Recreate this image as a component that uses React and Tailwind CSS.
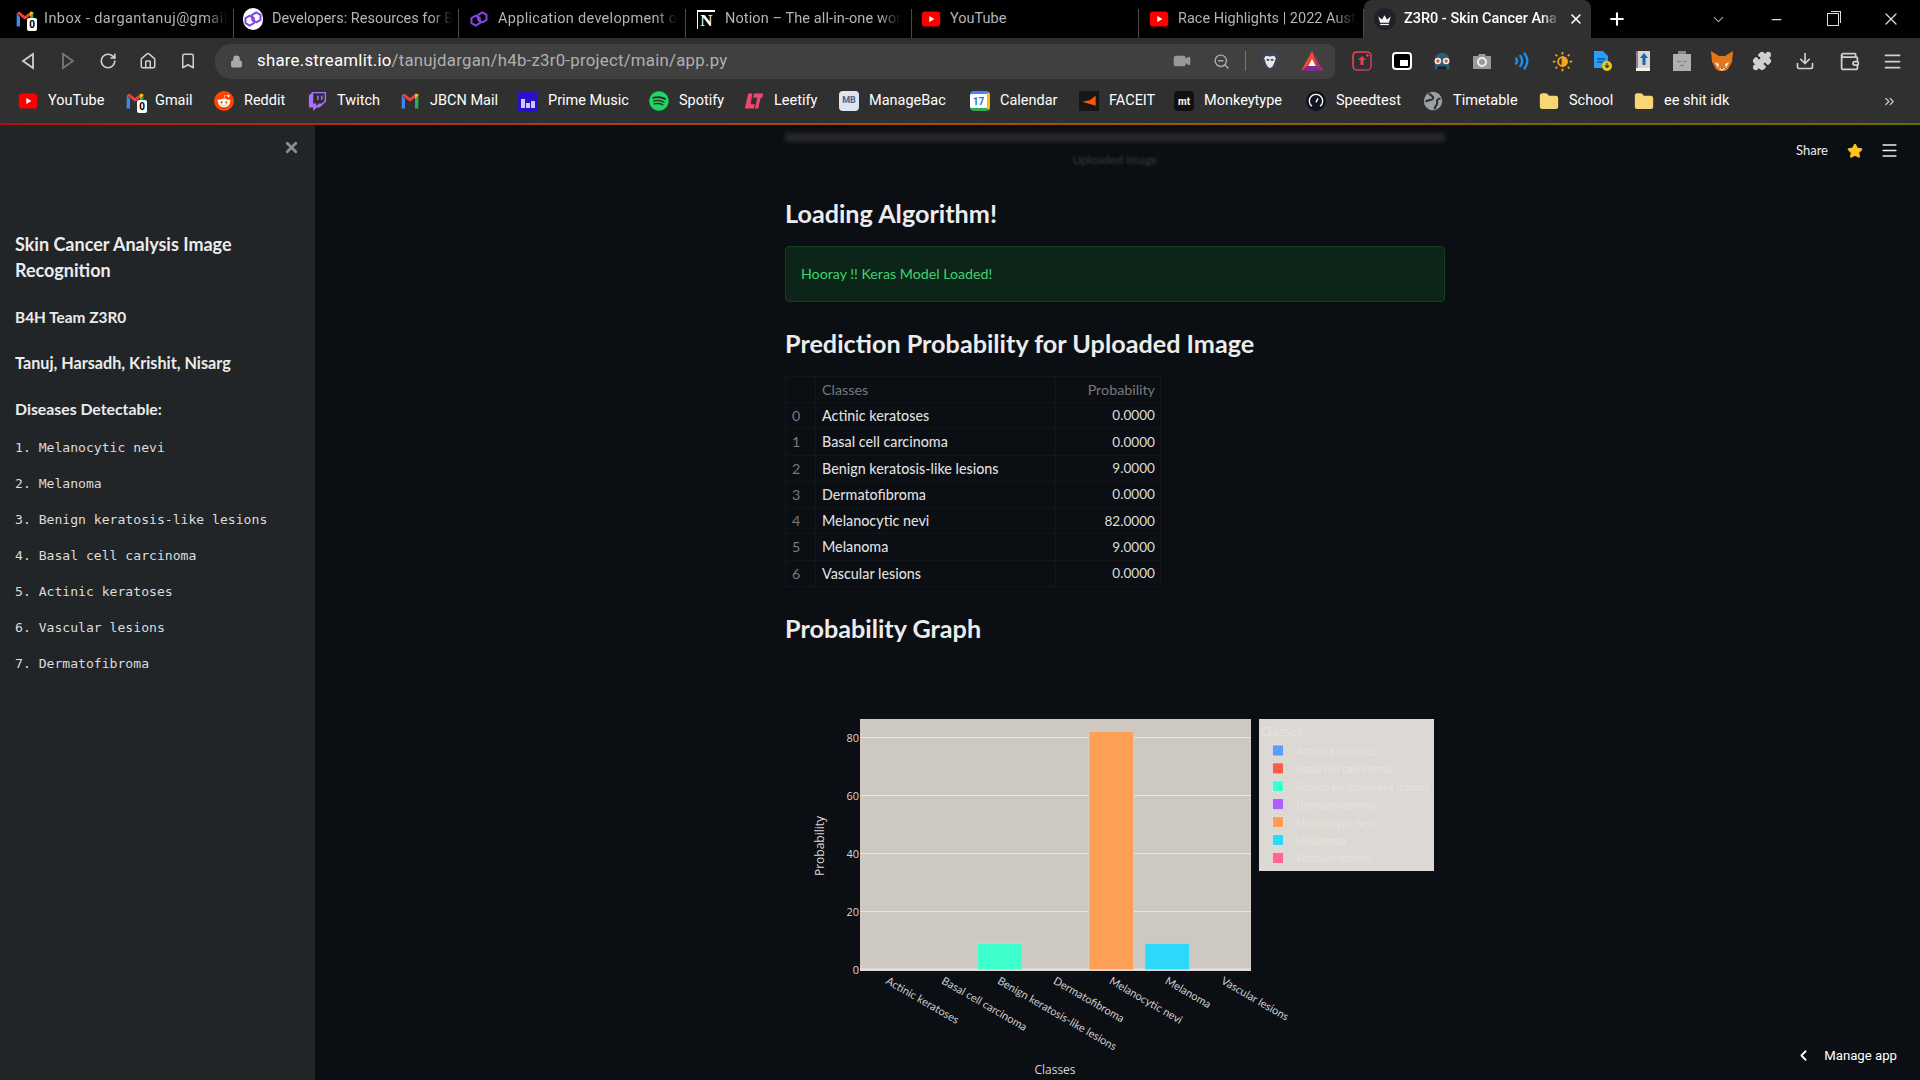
import React from 'react';
import {
  RotateCw, Home, Bookmark, Lock, Video, ZoomOut, Puzzle, Download, Wallet, Menu, X, Plus, ChevronDown,
  ChevronLeft, Minus, Star, ChevronsRight, Folder,
} from 'lucide-react';
import { FaRedditAlien, FaTwitch, FaSpotify } from 'react-icons/fa';

const segoe = { fontFamily: 'Roboto, "Open Sans", sans-serif' };

const Gmail = ({ size = 20, badge }) => (
  <div className="relative h-5 w-5">
    <svg width={size} height={size} viewBox="0 0 24 24">
      <path d="M2 5v16h4V10z" fill="#4285f4" />
      <path d="M22 5v16h-4V10z" fill="#34a853" />
      <path d="M2 5l10 8 10-8-3-2-7 5.5L5 3z" fill="#ea4335" />
      <path d="M18 10l4-5v-1l-3-1-1 1z" fill="#fbbc04" />
    </svg>
    {badge && (
      <span className="absolute -bottom-[2px] -right-[2px] flex h-[13px] w-[10px] items-center justify-center rounded-[2px] bg-white text-[10px] font-bold leading-none text-black">
        0
      </span>
    )}
  </div>
);

const YtIcon = ({ size = 20 }) => (
  <svg width={size} height={size} viewBox="0 0 24 24">
    <rect x="1" y="3" width="22" height="18" rx="4" fill="#f00" />
    <path d="M10 8.5l6 3.5-6 3.5z" fill="#fff" />
  </svg>
);

const Polygon = ({ color = '#8247e5', bg }) => (
  <div className={`flex h-[22px] w-[22px] items-center justify-center rounded-full ${bg ? 'bg-white' : ''}`}>
    <svg width="20" height="20" viewBox="0 0 24 24" fill="none" stroke={color} strokeWidth="2.4">
      <path d="M3 11l5-3 5 3v6l-5 3-5-3z" />
      <path d="M11 7l5-3 5 3v6l-5 3-5-3z" />
    </svg>
  </div>
);

const NotionIcon = () => (
  <div
    className="flex h-[19px] w-[18px] items-center justify-center border-t-2 border-l border-white bg-black text-[17px] font-bold leading-none text-white"
    style={{ fontFamily: '"Liberation Serif", serif' }}
  >
    N
  </div>
);

const Crown = () => (
  <div className="flex h-[22px] w-[22px] items-center justify-center rounded-full bg-[#1f2128]">
    <svg width="15" height="15" viewBox="0 0 24 24" fill="#f4f4f4">
      <path d="M2 7l6 5 4-7 4 7 6-5-3 10H5z" />
      <path d="M5 19h14v2H5z" />
    </svg>
  </div>
);

const fade = '[mask-image:linear-gradient(to_right,black_88%,transparent)]';

const tabs = [
  { title: 'Inbox - dargantanuj@gmail', icon: <Gmail badge />, w: 'w-[226px]', pl: 'pl-[7px]', track: 'tracking-[0.45px]', mask: fade },
  { title: 'Developers: Resources for B', icon: <Polygon bg />, w: 'w-[225px]', pl: 'pl-[9px]', track: '', mask: fade },
  { title: 'Application development o', icon: <Polygon />, w: 'w-[227px]', pl: 'pl-[10px]', track: 'tracking-[0.3px]', mask: fade },
  { title: 'Notion – The all-in-one wor', icon: <NotionIcon />, w: 'w-[226px]', pl: 'pl-[10px]', track: 'tracking-[0.1px]', mask: fade },
  { title: 'YouTube', icon: <YtIcon />, w: 'w-[227px]', pl: 'pl-[9px]', track: '', mask: '' },
  { title: 'Race Highlights | 2022 Aust', icon: <YtIcon />, w: 'w-[225px]', pl: 'pl-[10px]', track: '', mask: fade },
];

const bookmarks = [
  { label: 'YouTube', icon: <YtIcon />, w: 'w-[107px]' },
  { label: 'Gmail', icon: <Gmail badge />, w: 'w-[89px]' },
  { label: 'Reddit', icon: <div className="flex h-5 w-5 items-center justify-center rounded-full bg-[#ff4500] text-white"><FaRedditAlien size={14} /></div>, w: 'w-[93px]' },
  { label: 'Twitch', icon: <FaTwitch size={19} color="#a970ff" />, w: 'w-[93px]' },
  { label: 'JBCN Mail', icon: <Gmail />, w: 'w-[118px]' },
  { label: 'Prime Music', icon: (
    <div className="flex h-5 w-5 items-end justify-center gap-px bg-[#2a10c8] pb-[3px]">
      <span className="h-[9px] w-[4px] bg-[#cfc8ff]" />
      <span className="h-[5px] w-[4px] bg-[#cfc8ff]" />
      <span className="h-[7px] w-[4px] bg-[#cfc8ff]" />
    </div>
  ), w: 'w-[131px]' },
  { label: 'Spotify', icon: <FaSpotify size={20} color="#1ed760" />, w: 'w-[95px]' },
  { label: 'Leetify', icon: (
    <svg width="20" height="20" viewBox="0 0 24 24" fill="#f0476f">
      <path d="M5 3h5l-2 13h5l-1 5H1z" />
      <path d="M12 3h11l-1 5h-2l-3 13h-4l3-13h-5z" />
    </svg>
  ), w: 'w-[95px]' },
  { label: 'ManageBac', icon: (
    <div className="flex h-5 w-5 items-center justify-center rounded bg-[#dfe5ee] text-[9px] font-bold text-[#47608f]">MB</div>
  ), w: 'w-[131px]' },
  { label: 'Calendar', icon: (
    <div className="flex h-5 w-5 items-center justify-center rounded-sm border-t-[3px] border-r-[3px] border-b-[3px] border-t-[#4285f4] border-r-[#fbbc04] border-b-[#34a853] bg-white text-[10px] font-bold text-[#1a73e8]">17</div>
  ), w: 'w-[109px]' },
  { label: 'FACEIT', icon: (
    <div className="flex h-5 w-5 items-center justify-center bg-[#161616]">
      <svg width="16" height="16" viewBox="0 0 24 24"><path d="M22 4v15L2 13l11-2z" fill="#ff5500" /></svg>
    </div>
  ), w: 'w-[95px]' },
  { label: 'Monkeytype', icon: (
    <div className="flex h-5 w-5 items-center justify-center rounded bg-[#111] text-[10px] font-bold text-white">mt</div>
  ), w: 'w-[132px]' },
  { label: 'Speedtest', icon: (
    <div className="flex h-5 w-5 items-center justify-center rounded-full bg-[#11131f]">
      <svg width="16" height="16" viewBox="0 0 24 24" fill="none" stroke="#fff" strokeWidth="2">
        <path d="M6 20a10 10 0 1 1 12 0" />
        <path d="M12 14l3-6" />
      </svg>
    </div>
  ), w: 'w-[117px]' },
  { label: 'Timetable', icon: (
    <svg width="20" height="20" viewBox="0 0 24 24">
      <circle cx="12" cy="12" r="11" fill="#9aa0a6" />
      <path d="M7 3c3 3 6 3 5 6s-6 1-9 4M21 9c-3 0-5 2-4 5s-3 3-3 8" fill="none" stroke="#303030" strokeWidth="2.6" />
    </svg>
  ), w: 'w-[116px]' },
  { label: 'School', icon: <Folder size={21} color="#f7d774" fill="#f7d774" />, w: 'w-[95px]' },
  { label: 'ee shit idk', icon: <Folder size={21} color="#f7d774" fill="#f7d774" />, w: 'w-[110px]' },
];

const rows = [
  ['0', 'Actinic keratoses', '0.0000'],
  ['1', 'Basal cell carcinoma', '0.0000'],
  ['2', 'Benign keratosis-like lesions', '9.0000'],
  ['3', 'Dermatofibroma', '0.0000'],
  ['4', 'Melanocytic nevi', '82.0000'],
  ['5', 'Melanoma', '9.0000'],
  ['6', 'Vascular lesions', '0.0000'],
];

const diseases = [
  'Melanocytic nevi',
  'Melanoma',
  'Benign keratosis-like lesions',
  'Basal cell carcinoma',
  'Actinic keratoses',
  'Vascular lesions',
  'Dermatofibroma',
];

const chartData = [
  { name: 'Actinic keratoses', value: 0, color: '#5f9cff' },
  { name: 'Basal cell carcinoma', value: 0, color: '#f7604a' },
  { name: 'Benign keratosis-like lesions', value: 9, color: '#3dffcb' },
  { name: 'Dermatofibroma', value: 0, color: '#ac61ff' },
  { name: 'Melanocytic nevi', value: 82, color: '#ff9f56' },
  { name: 'Melanoma', value: 9, color: '#2dd9fb' },
  { name: 'Vascular lesions', value: 0, color: '#ff6692' },
];

// chart svg origin is at page (800, 700)
const Chart = () => {
  const left = 60;
  const slot = 55.86;
  const zero = 269.5;
  const unit = 2.9;
  return (
    <svg width="640" height="380" viewBox="0 0 640 380" style={{ fontFamily: '"Open Sans", sans-serif' }}>
      <rect x={left} y="19" width="391" height="252" fill="#cdc9c2" />
      {[20, 40, 60, 80].map((t) => (
        <line key={t} x1={left} x2={left + 391} y1={zero - t * unit} y2={zero - t * unit} stroke="#e7e5e1" strokeWidth="1" />
      ))}
      <line x1={left} x2={left + 391} y1={zero} y2={zero} stroke="#e7e5e1" strokeWidth="2" />
      {chartData.map((d, i) => (
        <rect
          key={d.name}
          x={left + slot * i + 5.6}
          y={zero - d.value * unit}
          width="44.7"
          height={d.value * unit}
          fill={d.color}
          stroke="#dcd9d4"
          strokeWidth="0.5"
        />
      ))}
      {[0, 20, 40, 60, 80].map((t) => (
        <text key={t} x="59" y={zero - t * unit + 4} textAnchor="end" fontSize="11" fill="#d8d8d8">{t}</text>
      ))}
      <text transform="translate(24,146) rotate(-90)" fontSize="12" fill="#d8d8d8" textAnchor="middle">Probability</text>
      {chartData.map((d, i) => (
        <text
          key={d.name}
          transform={`translate(${left + slot * i + 25},${283}) rotate(30)`}
          fontSize="11"
          fill="#cfcfcf"
          style={{ fontFamily: 'Lato, sans-serif' }}
        >
          {d.name}
        </text>
      ))}
      <text x="255" y="374" fontSize="12" fill="#d8d8d8" textAnchor="middle">Classes</text>
      <rect x="459" y="19" width="175" height="152" fill="#dcd9d4" />
      <text x="461" y="36" fontSize="12" fill="#e6e4e0">Classes</text>
      {chartData.map((d, i) => (
        <g key={d.name}>
          <rect x="472.5" y={45 + i * 17.9} width="11" height="11" fill={d.color} stroke="#e8e6e2" strokeWidth="0.7" />
          <text x="496" y={55 + i * 17.9} fontSize="10.2" fill="#e6e4e0">{d.name}</text>
        </g>
      ))}
    </svg>
  );
};

const Extensions = () => (
  <div className="flex items-center">
    <svg width="20" height="20" viewBox="0 0 20 20" className="ml-[17px]">
      <defs>
        <linearGradient id="pink" x1="0" y1="0" x2="1" y2="1">
          <stop offset="0" stopColor="#f2503f" />
          <stop offset="1" stopColor="#c22b8e" />
        </linearGradient>
      </defs>
      <rect x="1" y="1" width="18" height="18" rx="4" fill="none" stroke="url(#pink)" strokeWidth="1.6" />
      <path d="M10 5l4 4h-2.5v5h-3V9H6z" fill="#ee3a4f" />
      <circle cx="15.5" cy="4.5" r="1.2" fill="#f2503f" />
    </svg>
    <div className="ml-[20px] flex h-[18px] w-5 items-end justify-end rounded-sm border-2 border-white bg-black p-[2px]"><span className="h-[6px] w-[8px] bg-white" /></div>
    <svg width="22" height="22" viewBox="0 0 24 24" className="ml-[19px]">
      <path d="M4 11a8 8 0 0 1 16 0v10H4z" fill="#2c5f6e" />
      <rect x="7" y="18" width="10" height="3" fill="#12202a" />
      <circle cx="7.5" cy="12" r="3.6" fill="#f1ece6" />
      <circle cx="16.5" cy="12" r="3.6" fill="#f1ece6" />
      <circle cx="7.5" cy="12" r="1.8" fill="#d9573a" />
      <circle cx="16.5" cy="12" r="1.8" fill="#d9573a" />
    </svg>
    <svg width="20" height="20" viewBox="0 0 20 20" className="ml-[19px]">
      <path d="M1 5h5l1-2h6l1 2h5v13H1z" fill="#9a9a9a" />
      <circle cx="10" cy="11" r="4" fill="none" stroke="#eee" strokeWidth="2" />
    </svg>
    <svg width="20" height="20" viewBox="0 0 24 24" fill="none" stroke="#1e8ff0" strokeWidth="2.8" strokeLinecap="round" className="ml-[20px]">
      <path d="M5 9c1.5 2 1.5 4 0 6" />
      <path d="M10 6c3 4 3 8 0 12" />
      <path d="M15 3c4.5 6 4.5 12 0 18" />
    </svg>
    <svg width="21" height="21" viewBox="0 0 24 24" fill="none" stroke="#f5a623" strokeWidth="2" className="ml-[20px]">
      <circle cx="12" cy="12" r="5" />
      <path d="M12 7a5 5 0 0 1 0 10z" fill="#f5a623" />
      <path d="M12 1v3M12 20v3M1 12h3M20 12h3M4 4l2 2M18 18l2 2M4 20l2-2M18 6l2-2" />
    </svg>
    <svg width="20" height="22" viewBox="0 0 20 22" className="ml-[20px]">
      <path d="M1 1h9l5 5v12H1z" fill="#2a9df4" />
      <path d="M4 9h8M4 12h6" stroke="#0d5a9e" strokeWidth="1.4" />
      <circle cx="14" cy="16" r="5" fill="#e8c81e" />
      <path d="M14 13v4M12 15.5l2 2 2-2" stroke="#333" strokeWidth="1.2" fill="none" />
    </svg>
    <svg width="16" height="22" viewBox="0 0 16 22" className="ml-[22px]">
      <rect x="1" y="1" width="14" height="20" fill="#dcd6c8" />
      <rect x="1" y="1" width="2" height="20" fill="#8a7f96" />
      <path d="M9 3l4 5h-2.5v7h-3V8H5z" fill="#1565c0" />
      <rect x="1" y="18" width="14" height="3" fill="#f4f1ea" />
    </svg>
    <svg width="20" height="22" viewBox="0 0 20 22" className="ml-[21px]">
      <path d="M1 4h18v17H1z" fill="#b0b0b0" />
      <rect x="6" y="1" width="8" height="3" fill="#8a8a8a" />
      <path d="M5 11l2 1 2-1M11 11l2 1 2-1M8 15l2 1 2-1" stroke="#777" strokeWidth="1" fill="none" />
    </svg>
    <svg width="24" height="24" viewBox="0 0 24 24" className="ml-[18px]">
      <path d="M1 2l8 5h6l8-5-1 11-4 7-3 2h-6l-3-2-4-7z" fill="#e2761b" />
      <path d="M5 13l4 2-1 4zM19 13l-4 2 1 4z" fill="#f6efe6" />
      <path d="M9 19h6l-3 3z" fill="#f6efe6" />
      <path d="M11 19h2l-1 1.5z" fill="#222" />
    </svg>
    <Puzzle size={20} color="#d0d0d0" fill="#d0d0d0" className="ml-[18px]" />
    <Download size={20} className="ml-[23px]" />
    <Wallet size={21} className="ml-[24px]" />
    <Menu size={21} className="ml-[22px]" />
  </div>
);

export default function App() {
  return (
    <div className="flex h-[1080px] w-[1920px] flex-col overflow-hidden bg-[#0b0e13]" style={segoe}>
      {/* tab strip */}
      <div className="flex h-[38px] shrink-0 items-center bg-black pl-2">
        {tabs.map((t) => (
          <div key={t.title} className={`flex h-[29px] self-end ${t.w} ${t.pl} items-center gap-[9px] border-r border-[#4a4a4a] pb-[9px] pr-2 text-[14.5px] text-[#b4b4b4]`}>
            <span className="flex w-5 shrink-0 justify-center">{t.icon}</span>
            <span className={`whitespace-nowrap ${t.track} ${t.mask}`}>{t.title}</span>
          </div>
        ))}
        <div className="flex h-full w-[227px] items-center gap-[8px] rounded-t-lg bg-[#303030] pl-[10px] pr-[7px] text-[14.5px] font-medium text-white">
          <Crown />
          <span className="w-[157px] whitespace-nowrap [mask-image:linear-gradient(to_right,black_88%,transparent)]">Z3R0 - Skin Cancer Ana</span>
          <X size={16} strokeWidth={2.5} />
        </div>
        <Plus size={20} color="#fff" strokeWidth={2.5} className="ml-4" />
        <ChevronDown size={17} color="#aaa" strokeWidth={1.5} className="ml-[83px]" />
        <Minus size={15} color="#ddd" className="ml-[42px]" />
        <div className="relative ml-[43px] h-[13px] w-[12px] border border-[#ddd]">
          <div className="absolute -right-[3px] -top-[3px] h-[12px] w-[10px] border-r border-t border-[#ddd]" />
        </div>
        <X size={20} color="#ddd" strokeWidth={1.5} className="ml-[42px]" />
      </div>

      {/* toolbar */}
      <div className="flex h-[46px] shrink-0 items-center bg-[#303030] text-[#d0d0d0]">
        <div className="flex w-[215px] items-center pl-[20px]">
          <svg width="16" height="18" viewBox="0 0 16 18" fill="none" stroke="#d0d0d0" strokeWidth="1.8"><path d="M13 2L3 9l10 7z" /></svg>
          <svg width="16" height="18" viewBox="0 0 16 18" fill="none" stroke="#777" strokeWidth="1.8" className="ml-[24px]"><path d="M3 2l10 7-10 7z" /></svg>
          <RotateCw size={18} strokeWidth={2.2} className="ml-[23px]" />
          <Home size={18} className="ml-[22px]" />
          <Bookmark size={18} className="ml-[22px]" />
        </div>
        <div className="flex h-[35px] w-[1120px] items-center rounded-l-2xl rounded-r-lg bg-[#404040] pl-[15px]">
          <Lock size={13} color="#aaa" fill="#aaa" />
          <span className="ml-[14px] w-[914px] text-[16.8px] tracking-[0.25px] text-white">
            share.streamlit.io<span className="text-[#b0b0b0]">/tanujdargan/h4b-z3r0-project/main/app.py</span>
          </span>
          <Video size={18} color="#999" fill="#999" className="ml-[2px]" />
          <ZoomOut size={17} color="#aaa" className="ml-[22px]" />
          <div className="ml-[15px] h-5 w-px bg-[#777]" />
          <svg width="20" height="23" viewBox="0 0 24 26" className="ml-[14px]">
            <path d="M5 2h14l4 5-3 12-8 6-8-6L1 7z" fill="#3d4258" />
            <path d="M7 6l5 1 5-1 2 3-2 6-2 4-3 2-3-2-2-4-2-6z" fill="#e8e8e8" />
            <path d="M8 10h3v2H8zM13 10h3v2h-3z" fill="#3d4258" />
          </svg>
          <svg width="24" height="24" viewBox="0 0 24 24" className="ml-[20px]">
            <path d="M12 2l11 20H1z" fill="#ef4b2a" />
            <path d="M1 22h22l-6-5H7z" fill="#7b2d8e" />
            <path d="M12 2l11 20-6-5z" fill="#9a2f7a" />
            <path d="M12 10l3.5 7h-7z" fill="#fff" />
          </svg>
        </div>
        <Extensions />
      </div>

      {/* bookmarks bar */}
      <div className="flex h-[39px] shrink-0 items-center bg-[#303030] pb-[5px] pl-[17px] text-[14.5px] text-white">
        {bookmarks.map((b) => (
          <div key={b.label} className={`flex ${b.w} shrink-0 items-center gap-[10px] pl-[1px]`}>
            <span className="flex w-5 shrink-0 justify-center">{b.icon}</span>
            <span className="whitespace-nowrap">{b.label}</span>
          </div>
        ))}
        <ChevronsRight size={15} color="#ccc" className="ml-[139px]" />
      </div>
      <div className="h-[2px] shrink-0 bg-gradient-to-r from-[#b01010] via-[#a5500a] to-[#6b6a08]" />

      {/* streamlit page */}
      <div className="relative flex min-h-0 flex-1" style={{ fontFamily: 'Lato, "Open Sans", sans-serif' }}>
        <aside className="flex w-[315px] shrink-0 flex-col bg-[#212528] pl-[15px] text-[#ececec]">
          <div className="flex justify-end pr-[15px] pt-[14px]">
            <X size={17} color="#8b8d8f" strokeWidth={4} />
          </div>
          <h2 className="mt-[75px] w-[270px] text-[18px] font-bold leading-[26px]">Skin Cancer Analysis Image Recognition</h2>
          <p className="mt-[21px] text-[15.4px] font-bold leading-[26px]">B4H Team Z3R0</p>
          <p className="mt-[20px] text-[16.2px] font-bold leading-[26px]">Tanuj, Harsadh, Krishit, Nisarg</p>
          <p className="mt-[20px] text-[15.8px] font-bold leading-[26px]">Diseases Detectable:</p>
          <ol className="mt-[16px] flex flex-col gap-[16px] text-[13.1px] leading-[20px] text-[#dcdcdc]" style={{ fontFamily: '"DejaVu Sans Mono", monospace' }}>
            {diseases.map((d, i) => (
              <li key={d} className="whitespace-pre">{`${i + 1}. ${d}`}</li>
            ))}
          </ol>
        </aside>

        <main className="min-w-0 flex-1 pl-[470px]">
          <div className="flex w-[660px] flex-col">
            <div className="mt-[8px] h-[9px] bg-[#27272c] blur-[2px]" />
            <p className="mt-[10px] text-center text-[12px] leading-[16px] text-[#3a3c40] blur-[1px]">Uploaded Image</p>
            <h2 className="mt-[28px] text-[25.2px] font-bold leading-[34px] text-[#ececec]">Loading Algorithm!</h2>
            <div className="mt-[16px] flex h-[56px] items-center rounded border border-[#10421f] bg-[#0c2518] pl-[15px] text-[14.2px] text-[#3dd56d]">
              Hooray !! Keras Model Loaded!
            </div>
            <h2 className="mt-[24px] text-[25.2px] font-bold leading-[34px] text-[#ececec]">Prediction Probability for Uploaded Image</h2>
            <table className="mt-[16px] w-[376px] border-collapse text-[14.3px] text-[#dedede]">
              <thead>
                <tr className="h-[26px] text-[#77797d]">
                  <th className="w-[30px] border border-[#12151a]" />
                  <th className="w-[240px] border border-[#12151a] pl-[6px] text-left font-normal">Classes</th>
                  <th className="border border-[#12151a] pr-[5px] text-right font-normal">Probability</th>
                </tr>
              </thead>
              <tbody>
                {rows.map(([i, name, p]) => (
                  <tr key={i} className="h-[26.3px]">
                    <td className="border border-[#12151a] pl-[6px] text-left text-[#77797d]">{i}</td>
                    <td className="border border-[#12151a] pl-[6px] font-medium">{name}</td>
                    <td className="border border-[#12151a] pr-[5px] text-right text-[13.6px]">{p}</td>
                  </tr>
                ))}
              </tbody>
            </table>
            <h2 className="mt-[24px] text-[25.2px] font-bold leading-[34px] text-[#ececec]">Probability Graph</h2>
            <div className="ml-[15px] mt-[55px]">
              <Chart />
            </div>
          </div>
        </main>

        <div className="absolute right-[21px] top-[16px] flex items-center text-[13px] text-[#ececec]">
          <span>Share</span>
          <Star size={16} color="#fdc31c" fill="#fdc31c" className="ml-[19px]" />
          <Menu size={19} className="ml-[17px]" />
        </div>
        <div className="absolute right-[23px] top-[921px] flex items-center text-[13.2px] text-white" style={segoe}>
          <ChevronLeft size={17} strokeWidth={2.5} />
          <span className="ml-[12px]">Manage app</span>
        </div>
      </div>
    </div>
  );
}
